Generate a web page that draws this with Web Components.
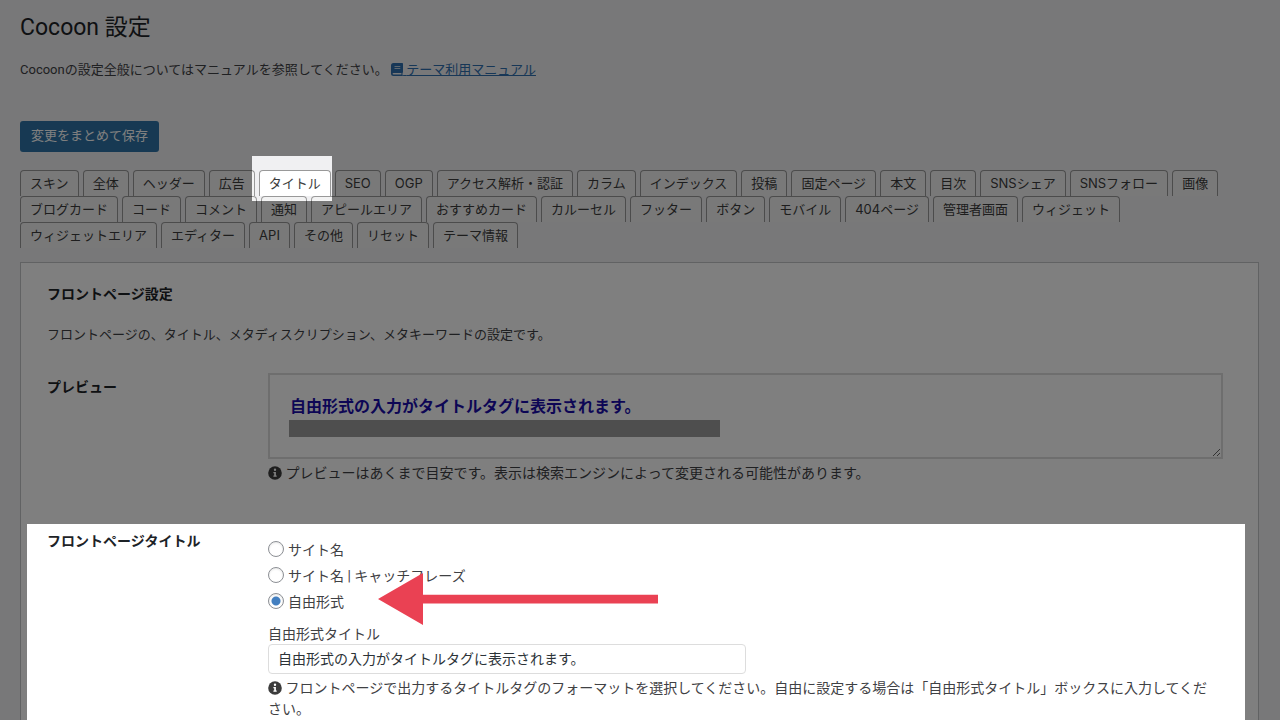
<!DOCTYPE html>
<html lang="ja">
<head>
<meta charset="utf-8">
<meta name="viewport" content="width=device-width, initial-scale=1">
<title>Cocoon 設定</title>
<style>
body {
  margin: 0;
  background: #f0f0f2;
  color: #3f4144;
  font-family: Roboto, "Noto Sans CJK JP", sans-serif;
  font-size: 13px;
  line-height: 20px;
}
</style>
</head>
<body>
<cocoon-settings></cocoon-settings>

<script>
const define = (name, html, setup) => {
  const template = document.createElement('template');
  template.innerHTML = html;
  customElements.define(name, class extends HTMLElement {
    constructor() {
      super();
      this.attachShadow({ mode: 'open' }).append(template.content.cloneNode(true));
    }
    connectedCallback() { if (setup) setup(this, this.shadowRoot); }
  });
};

define('manual-link', `
<style>
:host { display: inline; }
a { color: #2f6fae; text-decoration: underline; }
svg { width: 12px; height: 13px; vertical-align: -2px; fill: currentColor; }
</style>
<a href="#manual"><svg viewBox="0 0 12 13" aria-hidden="true"><path fill-rule="evenodd" d="M2.500 0H11.300Q12 0 12 .7V9.300L11.500 10V12.200L12 12.400V13H2.500Q0 13 0 10.500V2.500Q0 0 2.500 0zM3.500 3.200V4.100H9.300V3.200zM3.500 4.900V5.800H9.300V4.900zM2.500 9.900Q1.600 9.900 1.600 10.700T2.500 11.500H10.400V9.900z"/></svg> <slot></slot></a>`);

define('save-button', `
<style>
:host { display: block; }
button {
  height: 31px; padding: 0 11px 2px; border: 0; border-radius: 3px;
  background: #2e73a6; color: #fff; font: inherit; cursor: pointer;
}
</style>
<button type="submit"><slot></slot></button>`);

define('setting-tab', `
<style>
:host { display: block; }
button {
  display: block; height: 26px; padding: 0 9px 1px; white-space: nowrap;
  border: 1px solid #999; border-bottom: 0; border-radius: 4px 4px 0 0;
  background: #f3f3f3; color: #3c3c3c; font: inherit; cursor: pointer;
}
:host([selected]) button { background: #fff; }
</style>
<button type="button" role="tab"><slot></slot></button>`,
(host, root) => root.querySelector('button').setAttribute('aria-selected', host.hasAttribute('selected')));

define('tab-list', `
<style>
:host { display: flex; flex-wrap: wrap; column-gap: 4px; font-family: Inter, "Noto Sans CJK JP", sans-serif; }
</style>
<slot></slot>`, host => host.setAttribute('role', 'tablist'));

define('setting-row', `
<style>
:host { display: grid; grid-template-columns: 221px minmax(0, 1fr); align-items: start; }
h3 { margin: 4px 0 0; font-size: 14px; line-height: 20px; font-weight: 700; color: #1d2327; }
</style>
<h3></h3>
<div><slot></slot></div>`,
(host, root) => { root.querySelector('h3').textContent = host.getAttribute('heading'); });

define('title-preview', `
<style>
:host {
  display: block; box-sizing: border-box; height: 86px; padding: 21px 20px 0 19px;
  border: 2px solid #ddd; resize: both; overflow: hidden; max-width: 100%;
}
p { margin: 0; padding-left: 1px; font-size: 16px; line-height: 22px; font-weight: 700; color: #1a0dab; }
div { width: 431px; max-width: 100%; height: 17px; margin-top: 2px; background: #9d9d9d; }
</style>
<p><slot></slot></p>
<div></div>`);

define('info-note', `
<style>
:host { display: block; margin-top: 4px; padding-right: 8px; font-size: 14px; line-height: 21px; }
svg { width: 14px; height: 14px; vertical-align: -2px; }
</style>
<svg viewBox="0 0 14 14" aria-hidden="true"><circle cx="7" cy="7" r="6.800" fill="#3c3c3c"/><path fill="#fff" d="M7 2.600a1.200 1.200 0 1 1 0 2.400 1.200 1.200 0 0 1 0-2.400zM5.400 5.900h2.500v3.500h.8v1.300H5.400V9.400h.8V7.200h-.8z"/></svg>
<slot></slot>`);

define('title-format', `
<style>
:host { display: block; padding-top: 10px; font-size: 14px; }
fieldset { margin: 0; padding: 0; border: 0; }
.choice { display: flex; align-items: center; gap: 4px; height: 26px; }
input[type=radio] {
  appearance: none; box-sizing: border-box; width: 16px; height: 16px; margin: 0 0 2px;
  border: 1px solid #8c8f94; border-radius: 50%; background: #fff;
  box-shadow: inset 0 1px 2px rgba(0, 0, 0, .1);
}
input[type=radio]:checked { background: radial-gradient(circle, #437fc0 0 4px, #fff 5px); }
.name { display: block; margin-top: 9px; line-height: 20px; }
input[type=text] {
  display: block; box-sizing: border-box; width: 478px; max-width: 100%; height: 30px;
  padding: 0 9px 2px; border: 1px solid #ddd; border-radius: 4px; background: #fff;
  color: #2c3338; font: inherit;
}
</style>
<fieldset aria-label="フロントページタイトル">
  <div class="choice"><input type="radio" name="format" id="site"><label for="site">サイト名</label></div>
  <div class="choice"><input type="radio" name="format" id="catch"><label for="catch">サイト名 | キャッチフレーズ</label></div>
  <div class="choice"><input type="radio" name="format" id="free" checked><label for="free">自由形式</label></div>
</fieldset>
<label class="name" for="title">自由形式タイトル</label>
<input type="text" id="title" value="自由形式の入力がタイトルタグに表示されます。">`);

define('setting-panel', `
<style>
:host {
  display: block; box-sizing: border-box; flex: 1; margin-top: 14px;
  padding: 21px 35px 0 26px; border: 1px solid #c3c4c7; border-bottom: 0; background: #fff;
}
h2 { margin: 0; font-size: 14px; line-height: 20px; color: #1d2327; }
p { margin: 21px 0 28px; }
slot { display: flex; flex-direction: column; gap: 43px; }
</style>
<h2>フロントページ設定</h2>
<p>フロントページの、タイトル、メタディスクリプション、メタキーワードの設定です。</p>
<slot></slot>`);

/* Darkened layer with two clear windows: one on the tab, one on the title setting. */
define('guide-overlay', `
<style>
:host { position: absolute; inset: 0; pointer-events: none; }
.shade {
  position: absolute; inset: 0; background: rgba(0, 0, 0, .5);
  mask:
    linear-gradient(#000, #000) 252px 156px / 80px 45px no-repeat,
    linear-gradient(#000, #000) 27px 524px / calc(100% - 62px) 100% no-repeat,
    linear-gradient(#000, #000);
  mask-composite: exclude;
}
svg { position: absolute; left: 378px; top: 573px; width: 280px; height: 52px; }
</style>
<div class="shade"></div>
<svg viewBox="0 0 280 52" aria-hidden="true"><path fill="#ea4153" d="M0 26L45 0v21.800h235v8.800H45V52z"/></svg>`);

define('cocoon-settings', `
<style>
:host {
  display: flex; flex-direction: column; position: relative; box-sizing: border-box;
  min-height: 100vh; padding: 13px 21px 0 20px;
}
h1 { margin: 0; font-size: 23px; line-height: 30px; font-weight: 400; color: #1d2327; }
p { margin: 17px 0 41px; }
tab-list { margin-top: 18px; }
</style>
<h1>Cocoon 設定</h1>
<p>Cocoonの設定全般についてはマニュアルを参照してください。<manual-link>テーマ利用マニュアル</manual-link></p>
<save-button>変更をまとめて保存</save-button>
<tab-list></tab-list>
<setting-panel>
  <setting-row heading="プレビュー">
    <title-preview>自由形式の入力がタイトルタグに表示されます。</title-preview>
    <info-note>プレビューはあくまで目安です。表示は検索エンジンによって変更される可能性があります。</info-note>
  </setting-row>
  <setting-row heading="フロントページタイトル">
    <title-format></title-format>
    <info-note>フロントページで出力するタイトルタグのフォーマットを選択してください。自由に設定する場合は「自由形式タイトル」ボックスに入力してください。</info-note>
  </setting-row>
</setting-panel>
<guide-overlay></guide-overlay>`,
(host, root) => {
  const names = ['スキン', '全体', 'ヘッダー', '広告', 'タイトル', 'SEO', 'OGP', 'アクセス解析・認証', 'カラム',
    'インデックス', '投稿', '固定ページ', '本文', '目次', 'SNSシェア', 'SNSフォロー', '画像',
    'ブログカード', 'コード', 'コメント', '通知', 'アピールエリア', 'おすすめカード', 'カルーセル',
    'フッター', 'ボタン', 'モバイル', '404ページ', '管理者画面', 'ウィジェット', 'ウィジェットエリア',
    'エディター', 'API', 'その他', 'リセット', 'テーマ情報'];
  root.querySelector('tab-list').append(...names.map(name => {
    const tab = document.createElement('setting-tab');
    tab.textContent = name;
    tab.toggleAttribute('selected', name === 'タイトル');
    return tab;
  }));
});
</script>
</body>
</html>
